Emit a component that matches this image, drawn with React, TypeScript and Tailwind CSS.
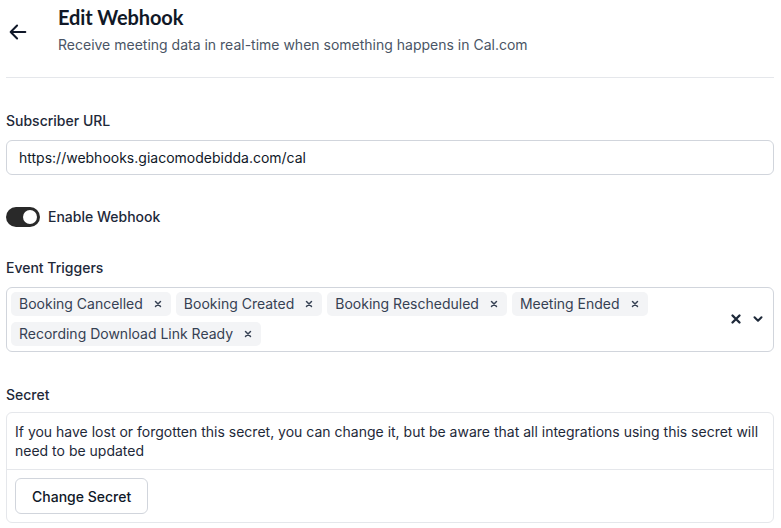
import React, { useState } from "react";

const triggers: string[] = [
  "Booking Cancelled",
  "Booking Created",
  "Booking Rescheduled",
  "Meeting Ended",
  "Recording Download Link Ready",
];

const SmallX = ({ className, width = 3 }: { className?: string; width?: number }) => (
  <svg
    viewBox="0 0 24 24"
    fill="none"
    stroke="currentColor"
    strokeWidth={width}
    strokeLinecap="round"
    className={className}
  >
    <path d="M6 6l12 12M18 6L6 18" />
  </svg>
);

const App = () => {
  const [enabled, setEnabled] = useState<boolean>(true);

  return (
    <div
      className="w-[781px] min-h-[528px] bg-white pl-[6px] pr-[7px] text-gray-900"
      style={{ fontFamily: "Inter, 'Noto Sans', sans-serif" }}
    >
      <header className="flex items-start pt-[5px] pb-[22px] border-b border-gray-200">
        <button className="mt-[16px] ml-[1px] w-[22px] h-[22px] flex items-center justify-center text-gray-900">
          <svg
            viewBox="0 0 24 24"
            fill="none"
            stroke="currentColor"
            strokeWidth="2.2"
            strokeLinecap="round"
            strokeLinejoin="round"
            className="w-[22px] h-[22px]"
          >
            <path d="M20 12H4M11 19l-7-7 7-7" />
          </svg>
        </button>
        <div className="ml-[29px]">
          <h1
            className="text-[20px] leading-[24px] font-bold tracking-[-0.1px] text-[#111827]"
            style={{ fontFamily: "Lato, Inter, sans-serif" }}
          >
            Edit Webhook
          </h1>
          <p className="mt-[6px] text-[14px] leading-[20px] text-gray-600">
            Receive meeting data in real-time when something happens in Cal.com
          </p>
        </div>
      </header>

      <section className="pt-[33px]">
        <label className="block text-[14px] leading-[20px] font-medium text-gray-800">
          Subscriber URL
        </label>
        <div className="mt-[9px] h-[35px] rounded-md border border-gray-300 flex items-center px-[12px] text-[14px] text-gray-900">
          https://webhooks.giacomodebidda.com/cal
        </div>
      </section>

      <section className="mt-[32px] flex items-center gap-[8px]">
        <button
          onClick={() => setEnabled(!enabled)}
          className={`w-[34px] h-[20px] rounded-full p-[3px] flex ${
            enabled ? "bg-[#292929] justify-end" : "bg-gray-300 justify-start"
          }`}
        >
          <span className="block w-[14px] h-[14px] rounded-full bg-white" />
        </button>
        <span className="text-[14px] leading-[20px] font-medium text-gray-800">
          Enable Webhook
        </span>
      </section>

      <section className="mt-[31px]">
        <label className="block text-[14px] leading-[20px] font-medium text-gray-800">
          Event Triggers
        </label>
        <div className="mt-[9px] min-h-[65px] rounded-md border border-gray-300 flex items-center pl-[4px] pr-[8px] pt-[3px] pb-[5px]">
          <div className="flex-1 flex flex-wrap gap-[6px_5px]">
            {triggers.map((t) => (
              <span
                key={t}
                className="h-[24px] rounded-[5px] bg-gray-100 flex items-center pl-[8px] pr-[8px] gap-[10px] text-[14px] text-gray-700"
              >
                {t}
                <SmallX className="w-[10px] h-[10px] text-gray-700" width={3.5} />
              </span>
            ))}
          </div>
          <div className="flex items-center gap-[8px] text-gray-800">
            <SmallX className="w-[14px] h-[14px]" width={4} />
            <svg
              viewBox="0 0 24 24"
              fill="none"
              stroke="currentColor"
              strokeWidth="3.5"
              strokeLinecap="round"
              strokeLinejoin="round"
              className="w-[14px] h-[14px]"
            >
              <path d="M6 9l6 6 6-6" />
            </svg>
          </div>
        </div>
      </section>

      <section className="mt-[33px]">
        <label className="block text-[14px] leading-[20px] font-medium text-gray-800">
          Secret
        </label>
        <div className="mt-[7px] rounded-md border border-gray-200">
          <p className="px-[8px] pt-[9px] pb-[9px] text-[14px] leading-[19px] text-gray-800">
            If you have lost or forgotten this secret, you can change it, but be
            aware that all integrations using this secret will need to be updated
          </p>
          <div className="border-t border-gray-200 px-[8px] pt-[8px] pb-[8px]">
            <button className="h-[36px] px-[16px] rounded-md border border-gray-300 text-[14px] font-medium text-gray-900">
              Change Secret
            </button>
          </div>
        </div>
      </section>
    </div>
  );
};

export default App;
